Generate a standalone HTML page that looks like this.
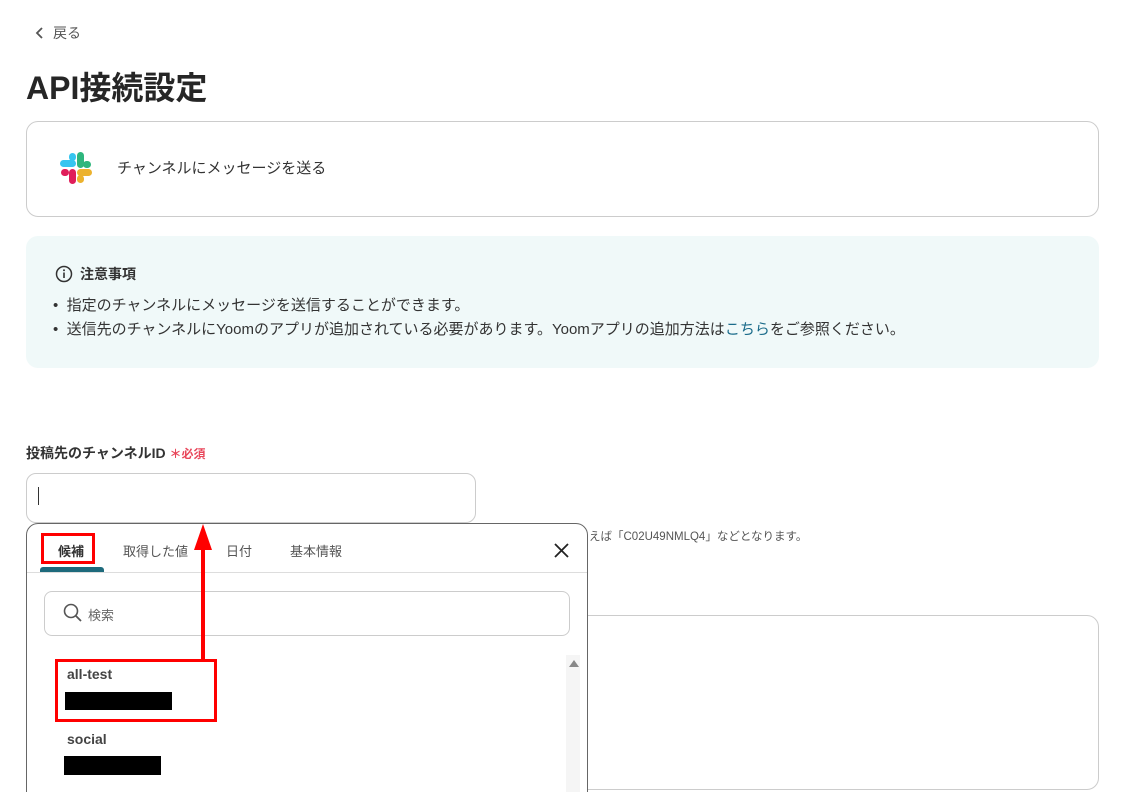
<!DOCTYPE html>
<html><head><meta charset="utf-8"><style>
*{margin:0;padding:0;box-sizing:border-box}
html,body{width:1130px;height:792px;overflow:hidden}
body{background:#fff;font-family:"Liberation Sans","Noto Sans CJK JP",sans-serif;color:#333;position:relative}
.a{position:absolute;white-space:nowrap}
</style></head><body>
<svg class="a" style="left:34px;top:26px" width="12" height="14" viewBox="0 0 12 14"><path d="M8 2L3 7l5 5" fill="none" stroke="#555" stroke-width="1.8"/></svg>
<div class="a" style="left:53px;top:23px;font-size:14px;color:#555">戻る</div>
<div class="a" style="left:26px;top:63px;font-size:32px;font-weight:bold;color:#262626">API接続設定</div>

<div class="a" style="left:26px;top:121px;width:1073px;height:96px;border:1px solid #ccc;border-radius:12px"></div>
<svg class="a" style="left:59px;top:151px" width="34" height="34" viewBox="0 0 34 34">
<rect x="1" y="9" width="16" height="7" rx="3.5" fill="#36c5f0"/>
<rect x="10" y="2" width="7" height="8" rx="3.5" fill="#36c5f0"/>
<rect x="18" y="1" width="7" height="16" rx="3.5" fill="#2eb67d"/>
<rect x="24" y="10" width="8" height="7" rx="3.5" fill="#2eb67d"/>
<rect x="18" y="18" width="15" height="7" rx="3.5" fill="#ecb22e"/>
<rect x="18" y="24" width="7" height="8" rx="3.5" fill="#ecb22e"/>
<rect x="10" y="18" width="7" height="15" rx="3.5" fill="#e01e5a"/>
<rect x="2" y="18" width="8" height="7" rx="3.5" fill="#e01e5a"/>
</svg>
<div class="a" style="left:117px;top:157px;font-size:15px;color:#333">チャンネルにメッセージを送る</div>

<div class="a" style="left:26px;top:236px;width:1073px;height:132px;background:#f0f9f9;border-radius:12px"></div>
<svg class="a" style="left:55px;top:265px" width="18" height="18" viewBox="0 0 18 18"><circle cx="9" cy="9" r="7.5" fill="none" stroke="#333" stroke-width="1.5"/><rect x="8.2" y="7.5" width="1.6" height="5.5" fill="#333"/><circle cx="9" cy="5.3" r="1" fill="#333"/></svg>
<div class="a" style="left:80px;top:264px;font-size:14px;font-weight:bold;color:#333">注意事項</div>
<div class="a" style="left:53px;top:294px;font-size:15px;color:#333">•&nbsp; 指定のチャンネルにメッセージを送信することができます。</div>
<div class="a" style="left:53px;top:318px;font-size:15px;color:#333">•&nbsp; 送信先のチャンネルにYoomのアプリが追加されている必要があります。Yoomアプリの追加方法は<span style="color:#1a6b8a">こちら</span>をご参照ください。</div>

<div class="a" style="left:26px;top:443px;font-size:14px;font-weight:bold;color:#333">投稿先のチャンネルID <span style="color:#e8465a;font-size:12px">＊必須</span></div>
<div class="a" style="left:26px;top:473px;width:450px;height:50px;border:1px solid #ccc;border-radius:10px"></div>
<div class="a" style="left:38px;top:487px;width:1px;height:18px;background:#333"></div>
<div class="a" style="left:589px;top:528px;font-size:11.5px;color:#555">えば「C02U49NMLQ4」などとなります。</div>
<div class="a" style="left:560px;top:615px;width:539px;height:175px;border:1px solid #ccc;border-radius:12px"></div>

<div class="a" style="left:26px;top:523px;width:562px;height:300px;border:1px solid #666;border-radius:12px;background:#fff"></div>
<div class="a" style="left:58px;top:541px;font-size:13px;font-weight:bold;color:#333">候補</div>
<div class="a" style="left:123px;top:541px;font-size:13px;color:#555">取得した値</div>
<div class="a" style="left:226px;top:541px;font-size:13px;color:#555">日付</div>
<div class="a" style="left:290px;top:541px;font-size:13px;color:#555">基本情報</div>
<div class="a" style="left:27px;top:572px;width:560px;height:1px;background:#ddd"></div>
<div class="a" style="left:40px;top:567px;width:64px;height:5px;background:#1e6a7c;border-radius:3px 3px 0 0"></div>
<svg class="a" style="left:553px;top:542px" width="17" height="17" viewBox="0 0 17 17"><path d="M2 2L15 15M15 2L2 15" stroke="#222" stroke-width="1.8"/></svg>
<div class="a" style="left:44px;top:591px;width:526px;height:45px;border:1px solid #ccc;border-radius:8px"></div>
<svg class="a" style="left:63px;top:603px" width="20" height="20" viewBox="0 0 20 20"><circle cx="8" cy="8" r="6.5" fill="none" stroke="#555" stroke-width="1.6"/><path d="M13 13l5 5" stroke="#555" stroke-width="1.8"/></svg>
<div class="a" style="left:88px;top:605px;font-size:13px;color:#666">検索</div>
<div class="a" style="left:566px;top:655px;width:14px;height:137px;background:#f5f5f5"></div>
<svg class="a" style="left:568px;top:659px" width="12" height="10" viewBox="0 0 12 10"><path d="M6 1L11 8H1z" fill="#888"/></svg>
<div class="a" style="left:67px;top:666px;font-size:14px;font-weight:bold;color:#444">all-test</div>
<div class="a" style="left:65px;top:692px;width:107px;height:18px;background:#000"></div>
<div class="a" style="left:67px;top:731px;font-size:14px;font-weight:bold;color:#444">social</div>
<div class="a" style="left:64px;top:756px;width:97px;height:19px;background:#000"></div>

<div class="a" style="left:41px;top:533px;width:54px;height:31px;border:3px solid #f00"></div>
<div class="a" style="left:55px;top:659px;width:162px;height:63px;border:3px solid #f00"></div>
<div class="a" style="left:201px;top:545px;width:4px;height:114px;background:#f00"></div>
<svg class="a" style="left:193px;top:524px" width="20" height="26" viewBox="0 0 20 26"><path d="M10 0L19 26H1z" fill="#f00"/></svg>
</body></html>
